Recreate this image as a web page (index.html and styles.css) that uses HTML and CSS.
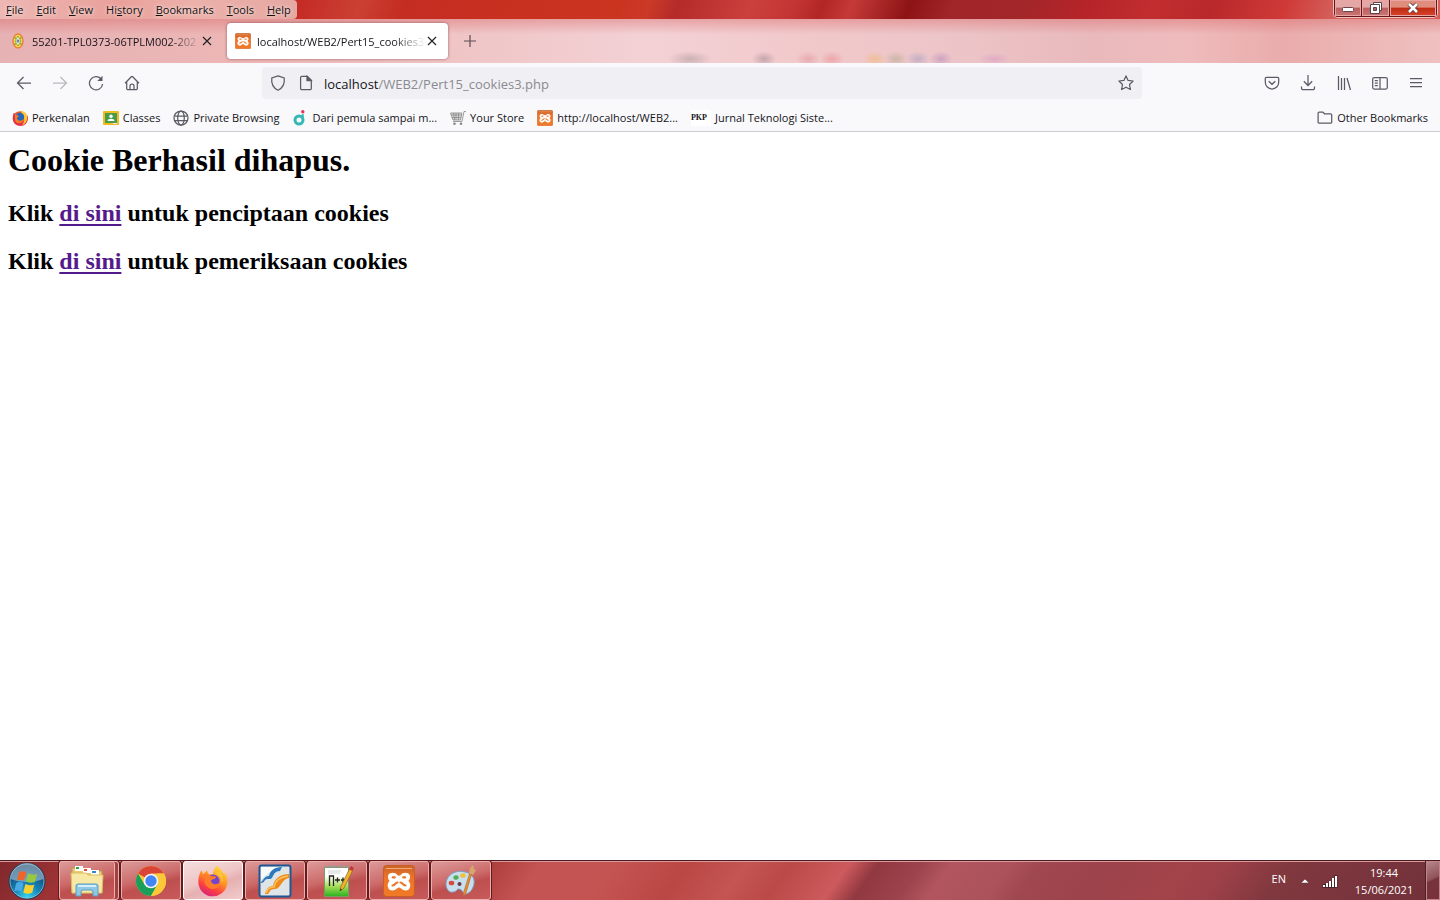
FILE: index.html
```html
<!DOCTYPE html>
<html lang="id">
<head>
<meta charset="utf-8">
<title>localhost/WEB2/Pert15_cookies3.php</title>
<link rel="stylesheet" href="styles.css">
</head>
<body>
<svg class="defs" aria-hidden="true">
  <defs>
    <linearGradient id="orange" x1="0" y1="0" x2="0" y2="1"><stop offset="0" stop-color="#c9642a"/><stop offset=".4" stop-color="#ee7426"/><stop offset="1" stop-color="#f07a28"/></linearGradient>
    <symbol id="xampp" viewBox="0 0 32 32">
      <rect x=".5" y=".5" width="31" height="31" rx="3" fill="url(#orange)" stroke="#c95e20"/>
      <path d="M3 3.500h26" stroke="#f6a878" stroke-width="1"/>
      <path d="M12.500 9.500C8.500 7.500 5.500 9.500 6 12.500C6.300 14.500 7.500 15.500 8 16C4.500 18.500 5 24.500 9.500 24.500C13 24.500 13.500 21.500 16 21.500S19 24.500 22.500 24.500C27 24.500 27.500 18.500 24 16C24.500 15.500 25.700 14.500 26 12.500C26.500 9.500 23.500 7.500 19.500 9.500C18 12.500 14 12.500 12.500 9.500Z" fill="#fff" stroke="#fff" stroke-width="2" stroke-linejoin="round"/>
      <path d="M9.800 12.300h2M20.200 12.300h2M9.500 20.500c3 0 2.500-3 5-3M22.500 20.500c-3 0-2.500-3-5-3" fill="none" stroke="#ee7528" stroke-width="2.200" stroke-linecap="round"/>
    </symbol>
    <symbol id="cross" viewBox="0 0 10 10"><path d="M1 1l8 8M9 1L1 9" fill="none" stroke="#222" stroke-width="1.200"/></symbol>
  </defs>
</svg>

<header class="chrome">
  <div class="titlebar">
    <nav class="menu" aria-label="Menu">
      <button class="menu-item"><u>F</u>ile</button>
      <button class="menu-item"><u>E</u>dit</button>
      <button class="menu-item"><u>V</u>iew</button>
      <button class="menu-item">Hi<u>s</u>tory</button>
      <button class="menu-item"><u>B</u>ookmarks</button>
      <button class="menu-item"><u>T</u>ools</button>
      <button class="menu-item"><u>H</u>elp</button>
    </nav>
    <div class="window-controls">
      <button class="win" aria-label="Minimize"><svg width="14" height="12" viewBox="0 0 14 12"><rect x="1.500" y="5.500" width="11" height="4" rx="1" fill="#fff" stroke="#68474c"/></svg></button>
      <button class="win" aria-label="Restore"><svg width="14" height="14" viewBox="0 0 14 14"><path d="M4.500 1.500h8v8h-8z" fill="#fff" stroke="#59444a"/><path d="M1.500 3.500h9v9h-9z" fill="#fff" stroke="#59444a"/><path d="M4.500 6.500h3v3h-3z" fill="#a9646a" stroke="#59444a"/></svg></button>
      <button class="win win-close" aria-label="Close"><svg width="14" height="12" viewBox="0 0 14 12"><path d="M3 2l8 8M11 2L3 10" stroke="#5c3b3d" stroke-width="4.400"/><path d="M3 2l8 8M11 2L3 10" stroke="#fff" stroke-width="2.600"/></svg></button>
    </div>
  </div>

  <div class="tabs">
    <div class="tab">
      <svg class="icon16" viewBox="0 0 16 16"><ellipse cx="8" cy="8" rx="5" ry="7" fill="#f6df3c" stroke="#ec7f3f" stroke-width="1.400"/><path d="M8 3l3 5-3 5-3-5z" fill="#e8edc5" stroke="#7a8852" stroke-width=".7"/><path d="M8 6.500v3M6.500 8h3" stroke="#4b7198" stroke-width="1.200"/><path d="M4.500 5h1.500M10 5h1.500M4.500 11h1.500M10 11h1.500" stroke="#557a50" stroke-width="1.200"/></svg>
      <span class="tab-title">55201-TPL0373-06TPLM002-202</span>
      <button class="tab-close" aria-label="Close tab"><svg width="10" height="10"><use href="#cross"/></svg></button>
    </div>
    <div class="tab tab-active">
      <svg class="icon16"><use href="#xampp"/></svg>
      <span class="tab-title">localhost/WEB2/Pert15_cookies3</span>
      <button class="tab-close" aria-label="Close tab"><svg width="10" height="10"><use href="#cross"/></svg></button>
    </div>
    <button class="new-tab" aria-label="New tab"><svg width="14" height="14" viewBox="0 0 14 14"><path d="M7 1v12M1 7h12" stroke="#5b4d54" stroke-width="1.200"/></svg></button>
  </div>

  <div class="toolbar">
    <div class="tools">
      <button class="tool" aria-label="Back"><svg class="line" viewBox="0 0 16 16"><path d="M15 8H1.500M7.500 2L1.500 8l6 6"/></svg></button>
      <button class="tool tool-off" aria-label="Forward" disabled><svg class="line" viewBox="0 0 16 16"><path d="M1 8h13.500M8.500 2l6 6-6 6"/></svg></button>
      <button class="tool" aria-label="Reload"><svg class="line" viewBox="0 0 16 16"><path d="M13.500 4.500A6.600 6.600 0 1 0 14.600 9"/><path d="M14.500.8V6H9.300z" fill="#5b5b66" stroke="none"/></svg></button>
      <button class="tool" aria-label="Home"><svg class="line" viewBox="0 0 16 16"><path d="M1 8.300L7.300 1.700a1 1 0 0 1 1.400 0L15 8.300M2.700 7v6.500a1.200 1.200 0 0 0 1.200 1.200h8.200a1.200 1.200 0 0 0 1.200-1.200V7M6 14.500V11a2 2 0 0 1 4 0v3.500"/></svg></button>
    </div>
    <div class="spring"></div>
    <div class="urlbar">
      <svg class="line" viewBox="0 0 16 16"><path d="M8 .8L14.200 3c.6 4.800-.8 9.600-6.200 12.200C2.600 12.600 1.200 7.800 1.800 3z"/></svg>
      <svg class="line" viewBox="0 0 16 16"><path d="M3.800 1.300h5.500l4 4v8.200a1.200 1.200 0 0 1-1.200 1.200H3.800a1.200 1.200 0 0 1-1.200-1.200v-11a1.200 1.200 0 0 1 1.200-1.200z"/><path d="M9 1.300v4.200h4.300z" fill="#5b5b66"/></svg>
      <div class="url" role="textbox" aria-label="Address" contenteditable="true"><span class="host">localhost</span>/WEB2/Pert15_cookies3.php</div>
      <button class="star" aria-label="Bookmark this page"><svg class="line" viewBox="0 0 16 16"><path stroke-linejoin="round" d="M8 .9l2.100 4.500 5 .6-3.600 3.500.9 5L8 12.200l-4.400 2.300.9-5L.9 6l5-.6z"/></svg></button>
    </div>
    <div class="spring"></div>
    <div class="tools">
      <button class="tool" aria-label="Pocket"><svg class="line" viewBox="0 0 16 16"><path d="M2.300 2.300h11.400a1 1 0 0 1 1 1v4a6.700 6.700 0 0 1-13.400 0v-4a1 1 0 0 1 1-1zM4.700 6.200L8 9.300l3.300-3.100"/></svg></button>
      <button class="tool" aria-label="Downloads"><svg class="line" viewBox="0 0 16 16"><path d="M8 0v10.300M3.800 6.300L8 10.500l4.200-4.200M1.500 11.500v1.700a1.500 1.500 0 0 0 1.500 1.500h10a1.500 1.500 0 0 0 1.500-1.500v-1.700"/></svg></button>
      <button class="tool" aria-label="Library"><svg class="line" viewBox="0 0 16 16"><path d="M2.500 1v14M5.500 3v12M8.500 3v12M11 3l3.500 12"/></svg></button>
      <button class="tool" aria-label="Sidebars"><svg class="line" viewBox="0 0 16 16"><rect x=".7" y="2.500" width="14.600" height="11.500" rx="1.500"/><path d="M8 2.500V14M2.800 5.500h3M2.800 8h3M2.800 10.500h3"/></svg></button>
      <button class="tool" aria-label="Application menu"><svg class="line" viewBox="0 0 16 16"><path d="M2 3.500h12M2 7.500h12M2 11.500h12"/></svg></button>
    </div>
  </div>

  <nav class="bookmarks" aria-label="Bookmarks">
    <a class="bookmark" href="#"><svg class="icon16" viewBox="0 0 16 16"><circle cx="8" cy="8.500" r="7.300" fill="#f0542a"/><path d="M1.500 3l3 2 .5 5 3 2 4-1 3-6A7.300 7.300 0 0 1 8 15.800 7.300 7.300 0 0 1 .8 8.500z" fill="#e62d4e"/><path d="M9 .8c5 1 7 5 6 9-1 3-3 5-5 5 3-3 3-7 0-9z" fill="#ffc929"/><circle cx="8" cy="7" r="4.200" fill="#2269bd"/><path d="M3 4l4 2-2 2c1 4 5 3 7 1-1 5-8 6-9 1z" fill="#f47a26"/></svg>Perkenalan</a>
    <a class="bookmark" href="#"><svg class="icon16" viewBox="0 0 16 16"><rect y="1" width="16" height="14" rx="1" fill="#f3bb20"/><rect x="2" y="3" width="12" height="10" fill="#4a9c4c"/><circle cx="8" cy="6.300" r="1.700" fill="#fff"/><path d="M4.500 11c0-3 7-3 7 0z" fill="#fff"/><path d="M10 13h4v1h-4z" fill="#eee"/></svg>Classes</a>
    <a class="bookmark" href="#"><svg class="line" viewBox="0 0 16 16"><circle cx="8" cy="8" r="7"/><ellipse cx="8" cy="8" rx="3.300" ry="7"/><path d="M1.500 6h13M1.500 10.500h13"/></svg>Private Browsing</a>
    <a class="bookmark" href="#"><svg class="icon16" viewBox="0 0 16 16"><circle cx="7" cy="10" r="4" fill="none" stroke="#35b8b5" stroke-width="3"/><path d="M8 6l3.500-2.500L12 7z" fill="#35b8b5"/><circle cx="10.800" cy="1.700" r="1.700" fill="#e7325e"/></svg>Dari pemula sampai m...</a>
    <a class="bookmark" href="#"><svg class="icon16" viewBox="0 0 16 16"><path d="M.5 3h11.500l-1.500 7H3z" fill="#ddd" stroke="#999"/><path d="M16 1.500h-2L12 11.500H3M1 5h11M2 7.500h9M3.500 3l1 7M6 3v7M8.500 3v7" fill="none" stroke="#888" stroke-width=".8"/><circle cx="4.500" cy="13.800" r="1.300" fill="#888"/><circle cx="11" cy="13.800" r="1.300" fill="#888"/></svg>Your Store</a>
    <a class="bookmark" href="#"><svg class="icon16"><use href="#xampp"/></svg>http://localhost/WEB2...</a>
    <a class="bookmark" href="#"><span class="pkp">PKP</span>Jurnal Teknologi Siste...</a>
    <a class="bookmark bookmark-other" href="#"><svg class="line" viewBox="0 0 16 16"><path d="M2.300 2h3.500l1.700 1.800h6a1.200 1.200 0 0 1 1.200 1.200v7a1.200 1.200 0 0 1-1.200 1.200H2.300A1.200 1.200 0 0 1 1.100 12V3.200A1.200 1.200 0 0 1 2.300 2z"/></svg>Other Bookmarks</a>
  </nav>
</header>

<main class="page">
  <h1>Cookie Berhasil dihapus.</h1>
  <h2>Klik <a href="#">di sini</a> untuk penciptaan cookies</h2>
  <h2>Klik <a href="#">di sini</a> untuk pemeriksaan cookies</h2>
</main>

<footer class="taskbar">
  <button class="start" aria-label="Start">
    <svg width="40" height="38" viewBox="0 0 40 38">
      <defs><radialGradient id="orb" cx=".5" cy=".95" r=".85"><stop offset="0" stop-color="#35d5f2"/><stop offset=".45" stop-color="#1480b5"/><stop offset="1" stop-color="#173c66"/></radialGradient></defs>
      <circle cx="20" cy="19" r="18" fill="url(#orb)" stroke="#24354b"/>
      <path d="M3.500 17a16.500 16 0 0 1 33 0c-10 4-23 4-33 0z" fill="#c5dae6" opacity=".5"/>
      <circle cx="20" cy="19" r="17" fill="none" stroke="#9fc8dc" opacity=".7"/>
      <g transform="translate(-3.500 -2.500) scale(1.200)">
      <path d="M13 10.500c2-1 4-1 6 .2l-1.800 7c-2-1-4-1.200-6-.2z" fill="#ef6528"/>
      <path d="M20.500 11.500c2.500 1.200 5 1.500 7.500.3l-1.800 7c-2.500 1-5 .8-7.400-.4z" fill="#97c83e"/>
      <path d="M10.700 19.500c2-1 4-.8 6 .2l-1.800 7c-2-1-4-1.200-6-.2z" fill="#4aa8e4"/>
      <path d="M18.300 20.500c2.500 1.200 5 1.400 7.400.3l-1.800 7c-2.500 1-5 .8-7.400-.4z" fill="#fbd02e"/>
      </g>
    </svg>
  </button>
  <div class="apps">
    <button class="app app-stack" aria-label="Windows Explorer">
      <svg width="34" height="32" viewBox="0 0 34 32"><path d="M2 5V3h10l2 3h18v22H2z" fill="#e8cc70" stroke="#b99845"/><path d="M5 1h8v5H5z" fill="#fff"/><path d="M6 2h3v2H6z" fill="#2fa34a"/><path d="M13 3h8v5h-8z" fill="#fff"/><path d="M14 4h3v2h-3z" fill="#df4c35"/><path d="M21 5h8v5h-8z" fill="#fff"/><path d="M22 6h4v2h-4z" fill="#3b88c8"/><path d="M1 8h15l2 2h15l-1 18H2z" fill="#f8e8a5" stroke="#d9bd63"/><path d="M6 31V21q0-2 2-2h18q2 0 2 2v10h-5v-4q0-2-2-2h-8q-2 0-2 2v4z" fill="#8fc8e4" stroke="#5b9cc2"/><path d="M8 21h18" stroke="#d6f0fa" stroke-width="2"/></svg>
    </button>
    <button class="app" aria-label="Google Chrome">
      <svg width="32" height="32" viewBox="0 0 32 32"><circle cx="16" cy="16" r="15" fill="#fbc83a"/><path d="M16 16L3 8.500A15 15 0 0 1 29 8.500H16z" fill="#db4537"/><path d="M3 8.500A15 15 0 0 0 16 31l6.500-11.500L16 16 9.500 19.500z" fill="#1a9f5a"/><path d="M29 8.500A15 15 0 0 1 16 31l6.500-11.500V8.500z" fill="#fbc83a"/><circle cx="16" cy="16" r="7.300" fill="#f4f4f4"/><circle cx="16" cy="16" r="5.700" fill="#4285f4"/></svg>
    </button>
    <button class="app app-active" aria-label="Firefox">
      <svg width="32" height="32" viewBox="0 0 32 32"><defs><linearGradient id="fox" x1=".8" y1="0" x2=".3" y2="1"><stop offset="0" stop-color="#ffe340"/><stop offset=".45" stop-color="#ff9024"/><stop offset=".75" stop-color="#fb3e43"/><stop offset="1" stop-color="#d7217c"/></linearGradient></defs><path d="M19.500 1c5 3 6.500 6 7 8l2-1c2 5 2.500 9 1.500 12A14.500 14.500 0 0 1 1.500 19C.8 14 2 9 4.500 5l1.500 4L10 5.500l2 4 4-.5c0-3 1.500-6 3.500-8z" fill="url(#fox)"/><circle cx="16" cy="16" r="6.500" fill="#7444cf"/><path d="M5 10c4-2 7-1 9 1l5 .5c0 3-4 2.500-5 4 0 4 6 5.500 10 1-1 7-9 10-14 5-3-3-3-6-1-9z" fill="#ff7d2a"/><path d="M17 8c5 0 9 5 7.500 11 3-5 1-10-2-12z" fill="#ffc637"/></svg>
    </button>
    <button class="app" aria-label="OpenOffice">
      <svg width="34" height="34" viewBox="0 0 34 34"><rect x="1.500" y="1.500" width="31" height="31" rx="2" fill="#dfe4e7" stroke="#1f5794" stroke-width="2"/><path d="M3 3h20L12 8 3 15z" fill="#f8fafa"/><path d="M3 18c2-1 3-6 8-6 1-5 5-9 13-9l-2 4c-5 0-6 3-8 7-2 2-5 0-7 2-1 2-2 3-4 3z" fill="#2c78bd"/><path d="M7 30c1-4 3-8 8-8 1-7 7-12 16-12v4c-6 1-7 6-11 10-3 2-6 0-8 3l-2 3z" fill="#f08a1c"/><path d="M8 29c1-3 3-6 8-6 1-6 6-10 14-11" fill="none" stroke="#ffc45c" stroke-width="1.500"/></svg>
    </button>
    <button class="app" aria-label="Notepad++">
      <svg width="34" height="34" viewBox="0 0 34 34"><defs><linearGradient id="note" x1="0" y1="0" x2="0" y2="1"><stop offset=".3" stop-color="#fff"/><stop offset=".65" stop-color="#a5dd55"/><stop offset="1" stop-color="#27b21f"/></linearGradient></defs><path d="M4.500 3.500h24v29h-24z" fill="url(#note)" stroke="#769c64"/><path d="M5 2.500h23" stroke="#999" stroke-width="2" stroke-dasharray="2 1"/><path d="M8 7h13M8 9h12" stroke="#cad2d0"/><path d="M9.500 22V12h4v10M15 16h5M17.500 13.500v5M21 16h4M23 13.500v5" fill="none" stroke="#222" stroke-width="1.300"/><path d="M20 27l1-5L30 4l3 2-9 18z" fill="#efb32d" stroke="#8c6020" stroke-width=".7"/><path d="M30 3.500l3 2" stroke="#c53542" stroke-width="3.500"/><path d="M20 27l.5-2.500 1.500 1z" fill="#222"/></svg>
    </button>
    <button class="app" aria-label="XAMPP"><svg width="32" height="32"><use href="#xampp"/></svg></button>
    <button class="app" aria-label="Paint">
      <svg width="32" height="32" viewBox="0 0 32 32"><path d="M20 7C11 4 1 10 1 19c0 5 3 9 7 8 4 0 3-3 6-3 4 0 3 5 7 5 5-1 9-8 8-14-1-4-4-7-9-8z" fill="#c8dfed" stroke="#7aa1be"/><ellipse cx="6.500" cy="18" rx="2.800" ry="2.300" fill="#d84a3b"/><ellipse cx="11" cy="12.500" rx="2.600" ry="2.300" fill="#54ad55"/><ellipse cx="18" cy="10.500" rx="2.800" ry="2.300" fill="#efc23d"/><circle cx="14.500" cy="19" r="2" fill="#6c3a4e"/><path d="M27 8l-6 20q-1 3-3 3 0-3 1-5l6-19z" fill="#e78b31" stroke="#a3602a" stroke-width=".5"/><path d="M24 8l1-5 3-3 1 4 2 1-3 5z" fill="#d7a66c"/></svg>
    </button>
  </div>
  <div class="tray">
    <span class="lang">EN</span>
    <button class="tray-button" aria-label="Show hidden icons"><svg width="10" height="8" viewBox="0 0 10 8"><path d="M5 2l4 4H1z" fill="#fff" stroke="#552f34" stroke-width=".5"/></svg></button>
    <svg class="signal" width="16" height="14" viewBox="0 0 16 14"><path d="M2 14v-4M5 14v-5M8 14V7M11 14V4M14 14V1" stroke="#4b252b" stroke-width="3"/><path d="M2 13v-2M5 13v-4M8 13V7M11 13V4M14 13V2" stroke="#fff" stroke-width="2"/></svg>
    <div class="clock"><time>19:44</time><time>15/06/2021</time></div>
  </div>
  <button class="show-desktop" aria-label="Show desktop"></button>
</footer>
</body>
</html>
```
FILE: styles.css
```css
* { box-sizing: border-box; }

body {
  margin: 0;
  min-height: 100vh;
  display: flex;
  flex-direction: column;
  background: #fff;
  color: #15141a;
  font-family: "Open Sans", "Noto Sans", sans-serif;
  font-size: 11px;
  line-height: 16px;
}

button {
  padding: 0;
  border: 0;
  background: none;
  color: inherit;
  font: inherit;
}

svg { display: block; flex: none; }
.defs { position: absolute; width: 0; height: 0; }
.icon16, .line { width: 16px; height: 16px; }
.line { fill: none; stroke: #5b5b66; stroke-width: 1.25; }

/* Title bar */
.titlebar {
  display: flex;
  justify-content: space-between;
  height: 19px;
  background: linear-gradient(110deg, #c52c26 21%, #cb4033 25%, #c42d22 28%, #c8301f 36%, #ca3520 43%, #cb3927 45%, #b42b2a 47%, #cb403d 52%, #c23534 55%, #b22726 57%, #c53a38 59%, #8d1315 63%, #a12629 66%, #a32629 71%, #b52429 75%, #c22e30 80%, #b9282b 84%, #cf3a37 89%, #d56560 93%, #d95c57 100%);
}
.menu {
  display: flex;
  gap: 13px;
  padding: 0 6px;
  border-radius: 0 4px 4px 0;
  background: linear-gradient(90deg, #edb7b4, #e9a09a 40%, #ecb1aa 65%, #e5a7a2);
}
.menu-item { line-height: 19px; color: #111; text-shadow: 0 0 4px #fff; }

.window-controls {
  display: flex;
  height: 18px;
  margin-right: 2px;
  border: 1px solid #f2c1bd;
  border-top: 0;
  border-radius: 0 0 5px 5px;
  overflow: hidden;
}
.win {
  display: flex;
  align-items: center;
  justify-content: center;
  width: 28px;
  border: solid #65181b;
  border-width: 0 1px 1px 0;
  box-shadow: inset 0 0 0 1px #e8a5a3;
  background: linear-gradient(#e3a8a6 45%, #b9605f 50%, #cb7775);
}
.win:first-child { border-left-width: 1px; }
.win-close {
  width: 47px;
  background: linear-gradient(#df8d7c 45%, #bf2c14 50%, #d8442a);
}

/* Tabs */
.tabs {
  display: flex;
  align-items: center;
  gap: 4px;
  height: 44px;
  padding: 0 4px;
  background:
    radial-gradient(ellipse 22px 8px at 690px 40px, rgba(130, 120, 125, .35), transparent),
    radial-gradient(ellipse 12px 8px at 764px 40px, rgba(130, 110, 125, .4), transparent),
    radial-gradient(ellipse 12px 8px at 808px 40px, rgba(210, 100, 110, .3), transparent),
    radial-gradient(ellipse 12px 8px at 832px 40px, rgba(225, 90, 90, .3), transparent),
    radial-gradient(ellipse 12px 8px at 875px 40px, rgba(240, 180, 80, .4), transparent),
    radial-gradient(ellipse 12px 8px at 896px 40px, rgba(140, 150, 110, .35), transparent),
    radial-gradient(ellipse 12px 8px at 918px 40px, rgba(120, 130, 190, .35), transparent),
    radial-gradient(ellipse 12px 8px at 941px 40px, rgba(150, 100, 180, .35), transparent),
    radial-gradient(ellipse 16px 6px at 994px 40px, rgba(200, 120, 200, .3), transparent),
    linear-gradient(rgba(214, 95, 95, .4), rgba(240, 190, 190, 0) 35%),
    linear-gradient(90deg, #e7b2b4, #edb7b6 18%, #efc4c5 31%, #f3d1d5 45%, #f1c8ca 57%, #edc6c9 65%, #e9b9bc 76%, #efbcbd 82%, #eaacac 89%, #efc0c0);
}
.tab {
  display: flex;
  align-items: center;
  gap: 6px;
  width: 219px;
  height: 36px;
  padding: 0 10px 0 6px;
  border-radius: 4px;
}
.tab-active {
  width: 221px;
  padding-left: 8px;
  background: #fff;
  box-shadow: 0 0 3px rgba(110, 50, 60, .7);
}
.tab-title {
  flex: 1;
  margin-right: -6px;
  padding-top: 1px;
  white-space: nowrap;
  mask-image: linear-gradient(to left, transparent, #000 32px);
}
.tab-close { width: 12px; height: 16px; display: grid; place-items: center; }
.new-tab { display: grid; place-items: center; width: 36px; height: 36px; }

/* Navigation toolbar */
.toolbar {
  display: flex;
  align-items: center;
  height: 40px;
  padding: 0 6px;
  background: #f9f9fb;
}
.tools { display: flex; }
.tool { display: grid; place-items: center; width: 36px; height: 32px; }
.tool-off { opacity: .4; }
.spring { flex: 0 1 112px; }
.urlbar {
  flex: 1;
  display: flex;
  align-items: center;
  gap: 12px;
  height: 32px;
  padding: 0 8px;
  border-radius: 4px;
  background: #f0f0f4;
}
.url {
  flex: 1;
  margin-left: -2px;
  padding-top: 2px;
  font-size: 13px;
  line-height: 20px;
  color: #8a8a90;
  white-space: nowrap;
}
.host { color: #15141a; }

/* Bookmarks */
.bookmarks {
  display: flex;
  align-items: center;
  gap: 13px;
  height: 29px;
  padding: 1px 12px 0;
  border-bottom: 1px solid #cccccf;
  background: #f9f9fb;
}
.bookmark {
  display: flex;
  align-items: center;
  gap: 4px;
  color: #15141a;
  text-decoration: none;
  white-space: nowrap;
}
.bookmark-other { margin-left: auto; }
.pkp {
  width: 20px;
  background: #fff;
  font: bold 8px/16px "Liberation Serif", serif;
}

/* Document */
.page {
  flex: 1;
  padding: 9px 8px 8px;
  color: #000;
  font-family: "Liberation Serif", serif;
}
h1 { margin: 0 0 20px; font-size: 32px; line-height: 38px; }
h2 { margin: 0 0 20px; font-size: 24px; line-height: 28px; }
.page a {
  color: #551a8b;
  text-decoration-thickness: 2px;
  text-underline-offset: 3px;
}

/* Taskbar */
.taskbar {
  display: flex;
  height: 40px;
  border-top: 1px solid #4b1a20;
  box-shadow: inset 0 1px #dc9b9b;
  background: linear-gradient(125deg, #80282c, #9d3335 5%, #a83a38 33%, #c35453 37%, #c45452 42%, #bb4744 47%, #c35553 51%, #bb4947 54%, #cd5a5d 58%, #913840 60%, #9c444d 63%, #b2555e 65%, #ab525a 69%, #a04850 71%, #9c434b 75%, #a3434a 81%, #9d4048 84%, #81383f 88%, #71313a);
  color: #fff;
}
.start { width: 54px; display: grid; place-items: center; }
.apps { display: flex; gap: 2px; margin-left: 5px; }
.app {
  display: grid;
  place-items: center;
  width: 60px;
  border: 1px solid #eab0ad;
  border-radius: 3px;
  box-shadow: 0 0 0 1px #66191d;
  background: linear-gradient(165deg, #dc9a99, #cc6a69 45%, #bd4f4f 60%, #c95a5b);
}
.app-stack { padding-right: 5px; box-shadow: inset -3px 0 #a04040, inset -4px 0 #eab0ad, 0 0 0 1px #66191d; }
.app-active { border-color: #fff; background: linear-gradient(160deg, #f5dede, #efc5c6 45%, #e6b0b2 60%, #f1cbcb); }
.tray { display: flex; align-items: center; margin-left: auto; }
.lang { margin: 0 14px 4px 0; }
.tray-button { width: 12px; }
.signal { margin-left: 10px; }
.clock {
  display: flex;
  flex-direction: column;
  align-items: center;
  width: 84px;
  margin-left: 4px;
  line-height: 17px;
}
.show-desktop {
  width: 14px;
  border: 1px solid #c08489;
  box-shadow: -1px 0 #4d2026;
  background: linear-gradient(155deg, #b4868b, #90525a 45%, #78323c 50%);
}
```
